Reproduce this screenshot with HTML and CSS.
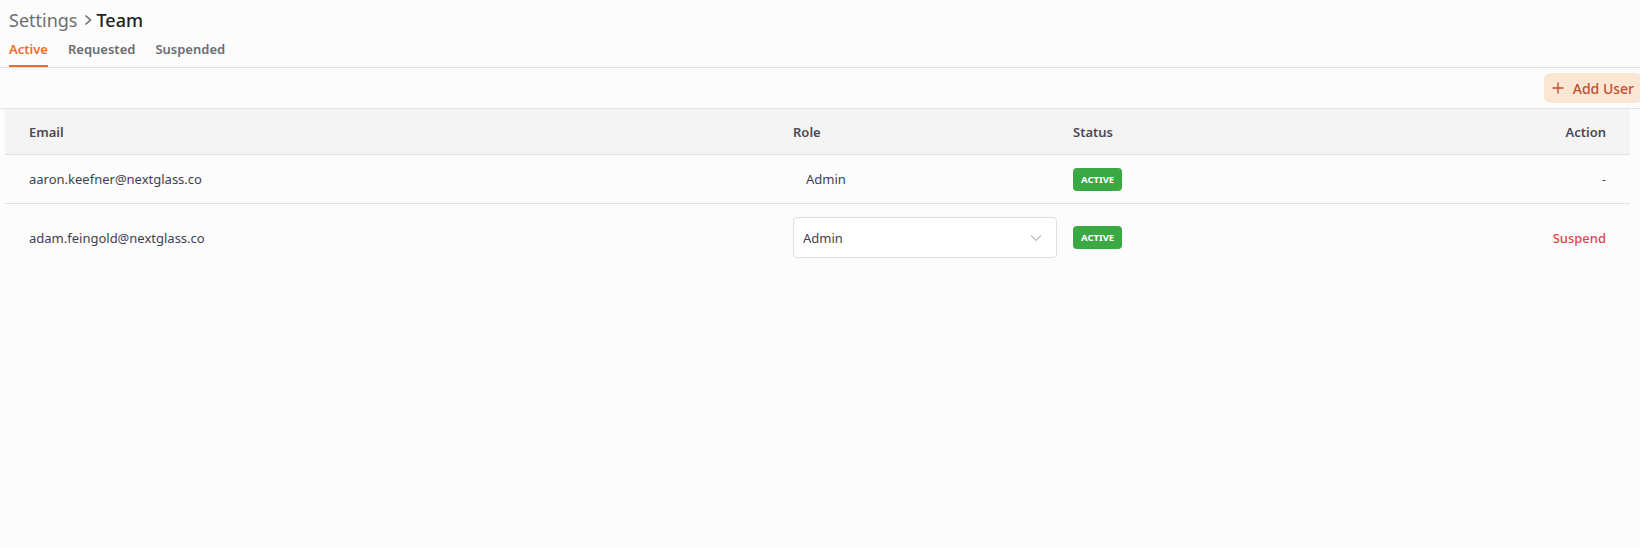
FILE: index.html
```html
<!DOCTYPE html>
<html>
<head>
<meta charset="utf-8">
<link rel="stylesheet" href="styles.css">
</head>
<body>
<div class="page">
  <header class="head">
    <h1 class="crumbs"><span class="crumb-parent">Settings</span><span class="crumb-sep"><svg width="10" height="14" viewBox="0 0 10 14"><path d="M2.5 2.5 L7.5 7 L2.5 11.5" fill="none" stroke="#666" stroke-width="1.5"/></svg></span><span class="crumb-current">Team</span></h1>
    <nav class="tabs">
      <a class="tab active">Active</a>
      <a class="tab">Requested</a>
      <a class="tab">Suspended</a>
    </nav>
  </header>
  <div class="toolbar">
    <button class="add-btn"><svg width="12" height="12" viewBox="0 0 12 12"><path d="M6 0.5 V11.5 M0.5 6 H11.5" stroke="#c24e2b" stroke-width="1.4"/></svg><span>Add User</span></button>
  </div>
  <div class="table">
    <div class="row thead">
      <div class="c c-email">Email</div>
      <div class="c c-role">Role</div>
      <div class="c c-status">Status</div>
      <div class="c c-action">Action</div>
    </div>
    <div class="row r1">
      <div class="c c-email">aaron.keefner@nextglass.co</div>
      <div class="c c-role"><span class="role-text">Admin</span></div>
      <div class="c c-status"><span class="badge">ACTIVE</span></div>
      <div class="c c-action"><span class="dash">-</span></div>
    </div>
    <div class="row r2 last">
      <div class="c c-email">adam.feingold@nextglass.co</div>
      <div class="c c-role"><div class="select"><span>Admin</span><svg width="12" height="8" viewBox="0 0 12 8"><path d="M1 1.5 L6 6.5 L11 1.5" fill="none" stroke="#bdbdbd" stroke-width="1.2"/></svg></div></div>
      <div class="c c-status"><span class="badge">ACTIVE</span></div>
      <div class="c c-action"><a class="suspend">Suspend</a></div>
    </div>
  </div>
</div>
</body>
</html>
```
FILE: styles.css
```css
html, body {
  margin: 0;
  padding: 0;
  background: #fcfcfc;
}
body {
  font-family: "Noto Sans", "Open Sans", sans-serif;
  color: #3f3f4f;
  width: 1640px;
  height: 548px;
  overflow: hidden;
}
.head {
  padding: 0 0 0 9px;
  border-bottom: 1px solid #e3e3e3;
}
.crumbs {
  margin: 0;
  padding-top: 7px;
  height: 26px;
  display: flex;
  align-items: center;
  font-size: 18px;
  font-weight: 400;
  line-height: 26px;
}
.crumb-parent {
  color: #6e6e72;
}
.crumb-sep {
  display: flex;
  align-items: center;
  margin: 0 4px 0 5px;
}
.crumb-current {
  color: #222;
  font-weight: 500;
}
.tabs {
  display: flex;
  gap: 20px;
  margin-top: 8px;
}
.tab {
  font-size: 13px;
  font-weight: 600;
  color: #6b6b72;
  padding-bottom: 7px;
  border-bottom: 2px solid transparent;
  line-height: 17px;
}
.tab.active {
  color: #f26a2a;
  border-bottom-color: #f26a2a;
}
.toolbar {
  height: 40px;
  display: flex;
  justify-content: flex-end;
  align-items: center;
  border-bottom: 1px solid #e3e3e3;
}
.add-btn {
  margin-right: -2px;
  height: 30px;
  padding: 0 8px 0 8px;
  display: flex;
  align-items: center;
  gap: 9px;
  background: #fbe6d3;
  border: none;
  border-radius: 6px;
  font-family: inherit;
  font-size: 14px;
  font-weight: 500;
  color: #c24e2b;
}
.table {
  margin: 0 10px 0 5px;
}
.row {
  display: flex;
  align-items: center;
  border-bottom: 1px solid #e3e3e3;
  font-size: 13px;
}
.thead {
  height: 45px;
  background: #f4f4f4;
  font-weight: 600;
  color: #4a4a55;
}
.r1 {
  height: 48px;
}
.r2 {
  height: 67px;
}
.row.last {
  border-bottom: none;
}
.c {
  padding: 0 24px;
  box-sizing: border-box;
}
.c-email { width: 764px; }
.c-role { width: 280px; }
.c-status { width: 300px; }
.c-action { flex: 1; text-align: right; }
.role-text {
  padding-left: 13px;
}
.badge {
  display: inline-block;
  background: #3aa944;
  color: #fff;
  font-size: 9.5px;
  font-weight: 700;
  line-height: 23px;
  padding: 0 8px;
  border-radius: 4px;
}
.select {
  width: 264px;
  height: 41px;
  box-sizing: border-box;
  border: 1px solid #e0e0e0;
  border-radius: 4px;
  background: #fff;
  display: flex;
  align-items: center;
  justify-content: space-between;
  padding: 0 14px 0 9px;
}
.suspend {
  color: #e0454f;
  font-weight: 500;
}
.dash {
  color: #555;
}
```
